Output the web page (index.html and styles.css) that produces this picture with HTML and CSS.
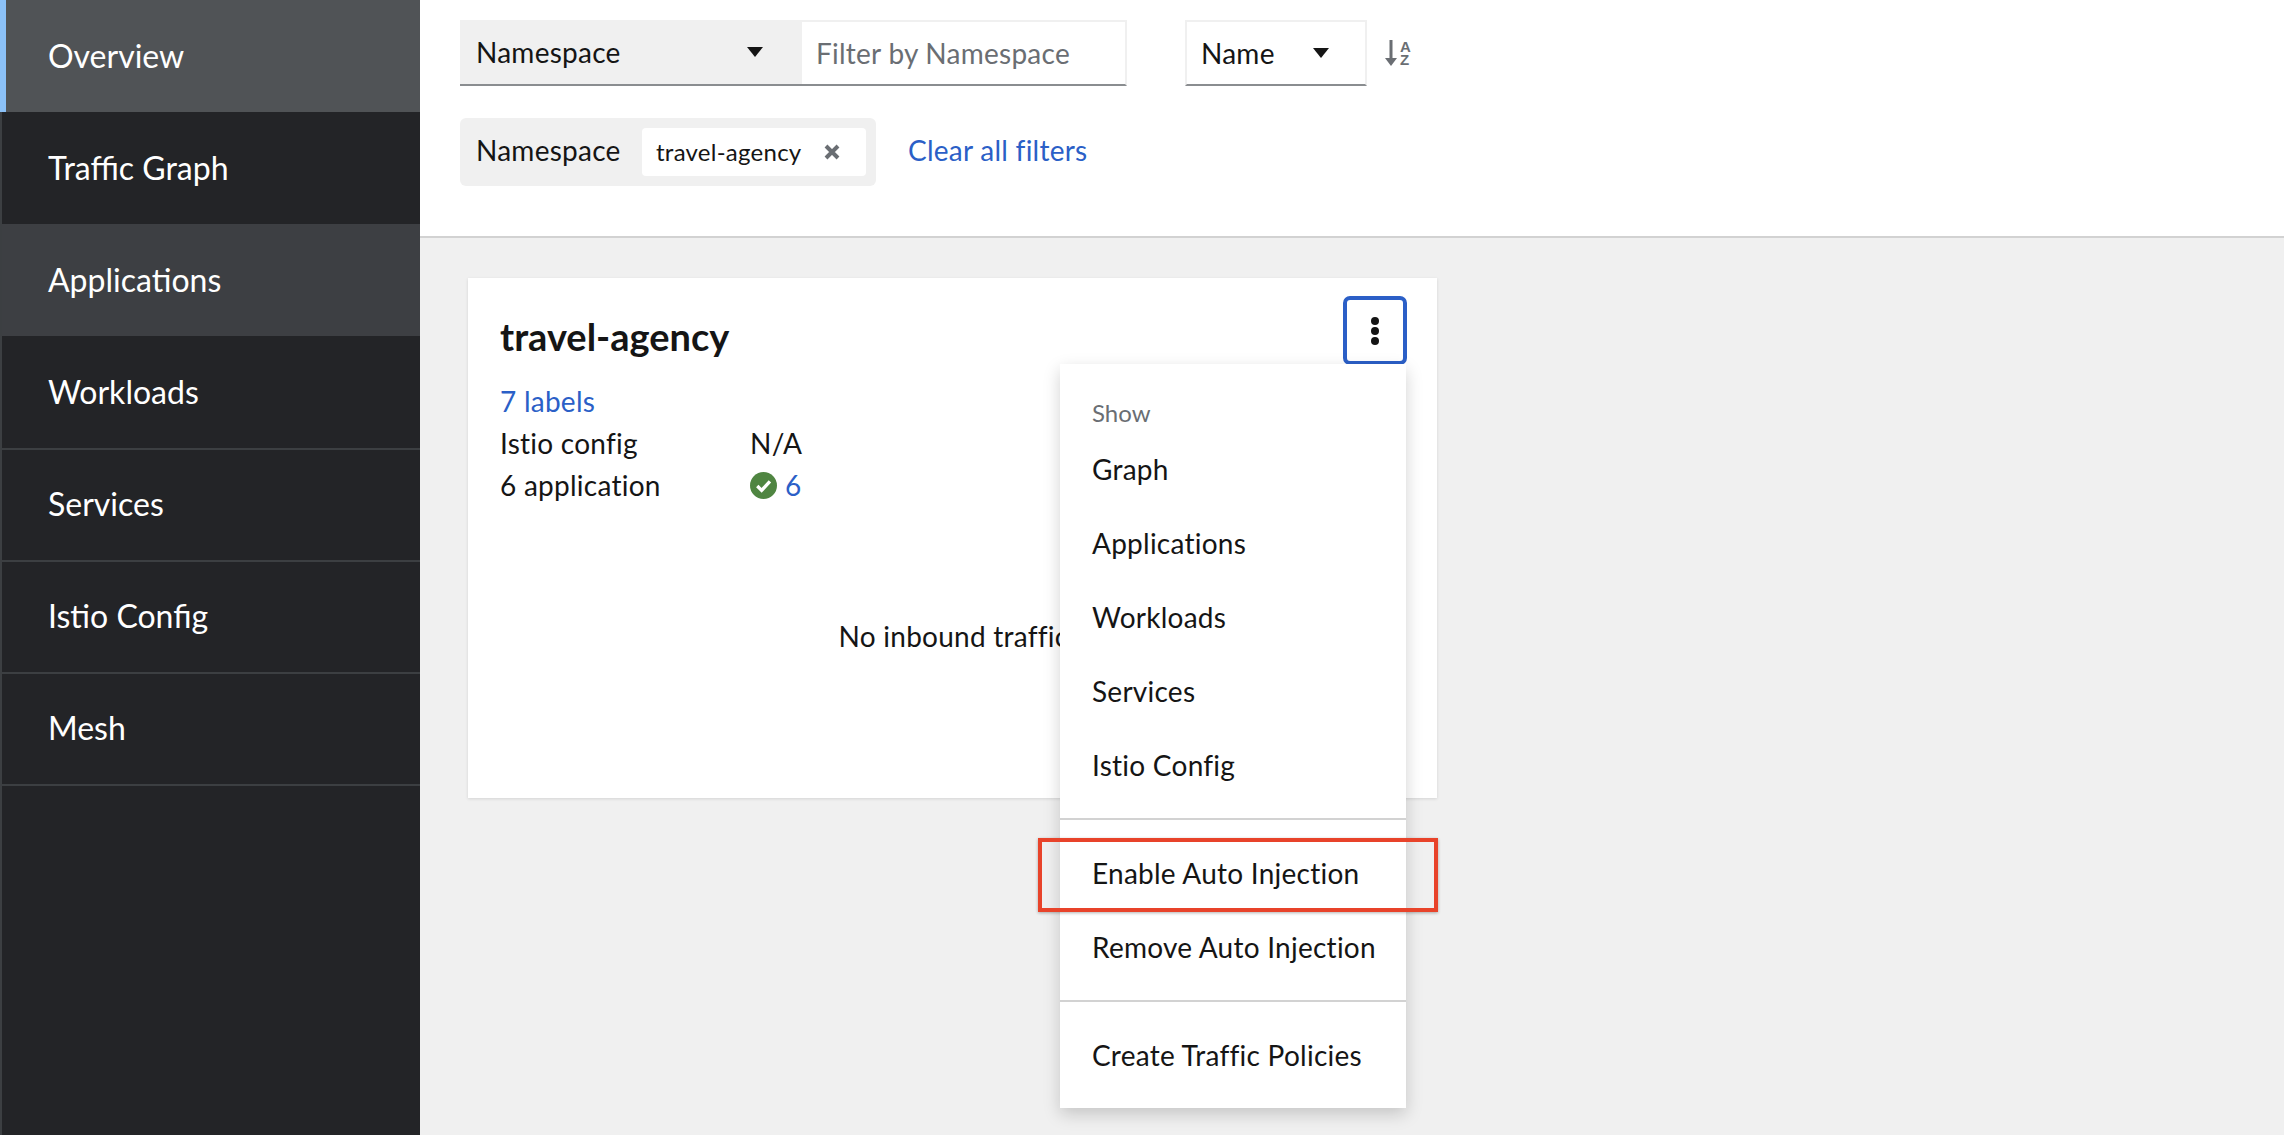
FILE: index.html
```html
<!DOCTYPE html>
<html lang="en">
<head>
    <meta charset="UTF-8">
    <title>Overview</title>
    <link rel="stylesheet" href="styles.css">
</head>
<body>

    <nav class="sidebar">
        <a class="nav-item nav-current">Overview</a>
        <a class="nav-item">Traffic Graph</a>
        <a class="nav-item nav-hover">Applications</a>
        <a class="nav-item">Workloads</a>
        <a class="nav-item">Services</a>
        <a class="nav-item">Istio Config</a>
        <a class="nav-item">Mesh</a>
    </nav>

    <main class="main">
        <div class="toolbar">
            <div class="filter-row">
                <div class="select select-grey">
                    <span>Namespace</span>
                    <svg class="caret" viewBox="0 0 16 10"><path d="M0 0h16L8 10z"/></svg>
                </div>
                <div class="filter-input">Filter by Namespace</div>
                <div class="select select-sort">
                    <span>Name</span>
                    <svg class="caret" viewBox="0 0 16 10"><path d="M0 0h16L8 10z"/></svg>
                </div>
                <div class="sort-icon">
                    <svg class="sort-arrow" viewBox="0 0 12 26"><path d="M4.500 0h3v18h4.500L6 26 0 18h4.500z"/></svg>
                    <span class="sort-letters"><span>A</span><span>Z</span></span>
                </div>
            </div>
            <div class="chip-row">
                <div class="chip-group">
                    <span>Namespace</span>
                    <div class="chip">
                        <span>travel-agency</span>
                        <svg class="chip-close" viewBox="0 0 18 18"><path d="M3 3l12 12M15 3L3 15"/></svg>
                    </div>
                </div>
                <a class="link clear-link">Clear all filters</a>
            </div>
        </div>

        <section class="card">
            <div class="card-head">
                <h2 class="card-title">travel-agency</h2>
                <button class="kebab" type="button"><i></i><i></i><i></i></button>
            </div>
            <a class="link card-line">7 labels</a>
            <div class="card-row"><span class="row-key">Istio config</span><span>N/A</span></div>
            <div class="card-row">
                <span class="row-key">6 application</span>
                <svg class="ok-icon" viewBox="0 0 26 26">
                    <circle cx="13" cy="13" r="13" fill="#4f8541"/>
                    <path d="M7 13.500l4.200 4.200L19.200 9" fill="none" stroke="#fff" stroke-width="3.200"/>
                </svg>
                <a class="link">6</a>
            </div>
            <p class="no-traffic">No inbound traffic</p>

            <div class="menu">
                <div class="menu-header">Show</div>
                <a class="menu-item">Graph</a>
                <a class="menu-item">Applications</a>
                <a class="menu-item">Workloads</a>
                <a class="menu-item">Services</a>
                <a class="menu-item">Istio Config</a>
                <div class="menu-divider"></div>
                <a class="menu-item">Enable Auto Injection</a>
                <a class="menu-item">Remove Auto Injection</a>
                <div class="menu-divider"></div>
                <a class="menu-item">Create Traffic Policies</a>
            </div>
            <div class="callout"></div>
        </section>
    </main>

</body>
</html>
```

FILE: styles.css
```css
body {
    margin: 0;
    height: 1135px;
    overflow: hidden;
    display: flex;
    font-family: 'Lato', 'Liberation Sans', sans-serif;
    font-size: 28px;
    letter-spacing: 0.25px;
    color: #151515;
    background: #f0f0f0;
}

/* Sidebar */
.sidebar {
    width: 420px;
    flex-shrink: 0;
    background: #232427;
    border-left: 2px solid #3c3f42;
    box-sizing: border-box;
}

.nav-item {
    display: flex;
    align-items: center;
    box-sizing: border-box;
    height: 112px;
    padding: 0 0 1px 46px;
    font-size: 32px;
    letter-spacing: 0;
    color: #fff;
    box-shadow: 0 2px 0 #3c3f42;
}

.nav-current {
    background: #505356;
    border-left: 6px solid #8bc1f7;
    margin-left: -2px;
    padding-left: 42px;
    box-shadow: none;
}

.nav-hover {
    background: #3d3f43;
    box-shadow: none;
}

/* Toolbar */
.main {
    flex: 1;
    min-width: 0;
}

.toolbar {
    box-sizing: border-box;
    height: 238px;
    padding: 20px 0 0 40px;
    background: #fff;
    border-bottom: 2px solid #d2d2d2;
}

.filter-row {
    display: flex;
    height: 66px;
}

.select {
    display: flex;
    align-items: center;
    justify-content: space-between;
    box-sizing: border-box;
    border-bottom: 2px solid #8a8d90;
}

.select-grey {
    width: 342px;
    padding: 0 39px 0 16px;
    background: #f0f0f0;
}

.select-sort {
    width: 182px;
    margin-left: 58px;
    padding: 0 36px 0 14px;
    border-top: 2px solid #f0f0f0;
    border-left: 2px solid #f0f0f0;
    border-right: 2px solid #f0f0f0;
}

.caret {
    width: 16px;
    height: 10px;
    fill: #151515;
}

.filter-input {
    display: flex;
    align-items: center;
    box-sizing: border-box;
    width: 325px;
    padding-left: 14px;
    color: #6a6e73;
    border-top: 2px solid #f0f0f0;
    border-right: 2px solid #f0f0f0;
    border-bottom: 2px solid #8a8d90;
}

.sort-icon {
    display: flex;
    align-items: center;
    gap: 3px;
    margin-left: 18px;
    color: #6a6e73;
}

.sort-arrow {
    width: 12px;
    height: 26px;
    fill: #6a6e73;
}

.sort-letters {
    display: flex;
    flex-direction: column;
    font-family: 'Liberation Sans', sans-serif;
    font-size: 15px;
    font-weight: 700;
    line-height: 13px;
    letter-spacing: 0;
}

.chip-row {
    display: flex;
    align-items: center;
    margin-top: 32px;
}

.chip-group {
    display: flex;
    align-items: center;
    justify-content: space-between;
    box-sizing: border-box;
    width: 416px;
    height: 68px;
    padding: 0 10px 4px 16px;
    background: #f0f0f0;
    border-radius: 6px;
}

.chip {
    display: flex;
    align-items: center;
    justify-content: space-between;
    box-sizing: border-box;
    width: 224px;
    height: 48px;
    margin-bottom: -4px;
    padding: 0 25px 2px 14px;
    font-size: 24px;
    letter-spacing: 0.25px;
    background: #fff;
    border-radius: 4px;
}

.chip-close {
    width: 18px;
    height: 18px;
    margin-top: 2px;
    fill: none;
    stroke: #6a6e73;
    stroke-width: 4;
}

.link {
    color: #2b5fc7;
}

.clear-link {
    margin: 0 0 5px 32px;
}

/* Card */
.card {
    position: relative;
    box-sizing: border-box;
    width: 969px;
    height: 520px;
    margin: 40px 0 0 48px;
    padding: 18px 30px 0 32px;
    background: #fff;
    box-shadow: 0 1px 3px rgba(0, 0, 0, 0.12);
}

.card-head {
    display: flex;
    justify-content: space-between;
    height: 69px;
}

.card-title {
    margin: 18px 0 0;
    font-size: 38px;
    font-weight: 700;
    line-height: 44px;
    letter-spacing: 0;
}

.kebab {
    display: flex;
    flex-direction: column;
    align-items: center;
    justify-content: center;
    gap: 2px;
    width: 64px;
    height: 69px;
    padding: 0;
    background: #fff;
    border: 4px solid #2b5fc7;
    border-radius: 7px;
}

.kebab i {
    width: 8px;
    height: 8px;
    background: #151515;
    border-radius: 50%;
}

.card-line {
    display: block;
    margin-top: 15px;
    line-height: 42px;
}

.card-row {
    display: flex;
    align-items: center;
    height: 42px;
}

.row-key {
    width: 250px;
}

.ok-icon {
    width: 27px;
    height: 27px;
    margin-right: 8px;
}

.no-traffic {
    margin: 109px 0 0;
    line-height: 42px;
    text-align: center;
}

/* Dropdown over the card */
.menu {
    position: absolute;
    top: 86px;
    right: 31px;
    width: 346px;
    padding: 16px 0;
    background: #fff;
    box-shadow: 0 6px 16px rgba(0, 0, 0, 0.18);
}

.menu-header {
    box-sizing: border-box;
    height: 52px;
    padding: 14px 32px 0;
    font-size: 24px;
    line-height: 38px;
    letter-spacing: 0;
    color: #6a6e73;
}

.menu-item {
    display: flex;
    align-items: center;
    box-sizing: border-box;
    height: 74px;
    padding: 0 0 1px 32px;
}

.menu-divider {
    height: 2px;
    margin: 16px 0;
    background: #d2d2d2;
}

.callout {
    position: absolute;
    left: 570px;
    top: 560px;
    box-sizing: border-box;
    width: 400px;
    height: 74px;
    border: 4px solid #e8432a;
    box-shadow: 0 1px 3px rgba(0, 0, 0, 0.3);
}
```
